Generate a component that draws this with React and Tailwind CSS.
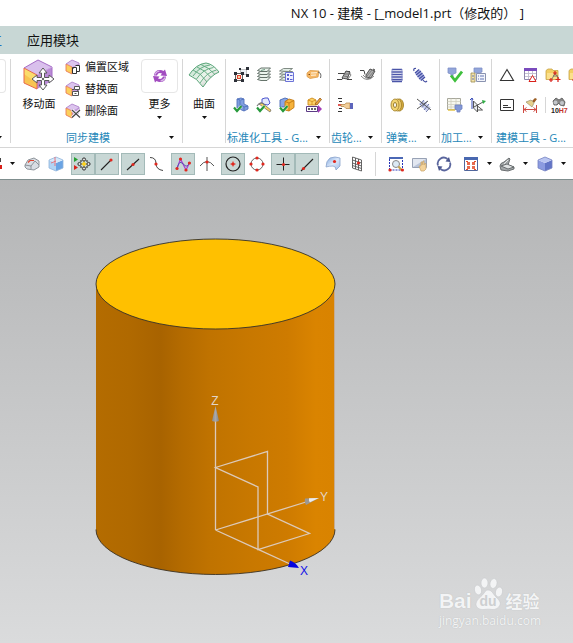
import React from "react";

const RED = "#d9201a";

function Icon({ size = 16, w, h, box, children }) {
  const width = w || size;
  const height = h || size;
  return (
    <svg width={width} height={height} viewBox={box || `0 0 ${width} ${height}`} className="block shrink-0" aria-hidden="true">
      {children}
    </svg>
  );
}

function Caret() {
  return (
    <svg width="5" height="3" viewBox="0 0 5 3" className="block shrink-0" aria-hidden="true">
      <path d="M0 0h5L2.500 3z" fill="#111" />
    </svg>
  );
}

/* ---------- large and face-editing icons ---------- */

function MoveFaceIcon() {
  return (
    <Icon w={32} h={32}>
      <path d="M1 9l13 7v14L1 24z" fill="#f8c552" />
      <path d="M1 9l13 7v8L1 15z" fill="#fbdc6c" />
      <path d="M1 9L15 1l14 7-15 8z" fill="#d9c0ec" />
      <path d="M14 16l15-8v14l-15 8z" fill="#b98ad6" />
      <path d="M14 30L1 24V9l13 7z" fill="none" stroke="#e8694c" />
      <path d="M1 9L15 1l14 7v12" fill="none" stroke="#a56cc6" />
      <path d="M14 16l15-8" stroke="#c9a2e0" />
      <path d="M20 9l4 5h-2.500v4.500H26V16l5 4-5 4v-2.500h-4.500V26H24l-4 5-4-5h2.500v-4.500H14V24l-5-4 5-4v2.500h4.500V14H16z" fill="#fff" stroke="#5a5a5a" />
      <circle cx="20" cy="20" r="1.200" fill="#6a6a6a" />
    </Icon>
  );
}

function MiniCube({ children }) {
  return (
    <Icon>
      <path d="M1 5l6 3v7l-6-3z" fill="#fbd05c" />
      <path d="M1 5l6-4 7 3-7 4z" fill="#dcc4ee" />
      <path d="M7 8l7-4v7l-7 4z" fill="#c39cdc" />
      <path d="M7 15l-6-3V5l6 3z" fill="none" stroke="#ea7a58" strokeWidth=".9" />
      <path d="M1 5l6-4 7 3v4" fill="none" stroke="#b083cc" strokeWidth=".9" />
      {children}
    </Icon>
  );
}

const OffsetIcon = () => (
  <MiniCube>
    <path d="M7.500 8.500h4v6h-4zM10.500 6.500h4v6h-3" fill="#fff" stroke="#333" />
    <path d="M7.500 10l2-2" stroke="#333" />
  </MiniCube>
);
const ReplaceIcon = () => (
  <MiniCube>
    <path d="M7.500 10.500h6v4h-6zM9.500 5.500h5v3h-5z" fill="#fff" stroke="#555" />
    <path d="M7 8.500h2M12 9.500l2 1M9.500 12.500h2" stroke="#555" />
  </MiniCube>
);
const DeleteFaceIcon = () => (
  <MiniCube>
    <path d="M7 7l8 7.500M15 7l-8 7.500" stroke="#fff" strokeWidth="3" />
    <path d="M7 7l8 7.500M15 7l-8 7.500" stroke="#484848" strokeWidth="1.200" />
  </MiniCube>
);

function RefreshIcon() {
  return (
    <Icon>
      <path d="M2 7.500Q2.500 2 8 2q2 0 3.500 1L13 1.500 15 8l-6.500-.5L10 5.500Q6 4 5 7.500z" fill="#a24cc0" />
      <path d="M14 8.500Q13.500 14 8 14q-2 0-3.500-1L3 14.500 1 8l6.500.5L6 10.500Q10 12 11 8.500z" fill="#a24cc0" />
      <path d="M3 6.500Q4 3.500 7.500 3M13 9.500Q12 12.500 8.500 13" fill="none" stroke="#d9b8e8" strokeWidth="1.200" />
    </Icon>
  );
}

function SurfaceIcon() {
  return (
    <Icon w={32} h={26}>
      <defs>
        <linearGradient id="surf" x1="0" y1="0" x2="1" y2="1">
          <stop offset="0" stopColor="#b9dec8" />
          <stop offset=".55" stopColor="#eef5ee" />
          <stop offset="1" stopColor="#b0aeae" />
        </linearGradient>
      </defs>
      <path d="M1 13Q8 2 18 1q7 1 13 9-8 3-16 15Q9 16 1 13z" fill="url(#surf)" stroke="#5aa67a" />
      <path d="M5 8q8 3 14 12M9 5q8 3 14 10.500M13 2.500q8 3 14 10M5 14Q12 4 22 3M8.500 17Q15 7 25.500 5.500M12 21Q19 10 28.500 8" fill="none" stroke="#5aa67a" strokeWidth=".9" />
    </Icon>
  );
}

/* ---------- ribbon grid icons ---------- */

const SketchBoxesIcon = () => (
  <Icon>
    <path d="M7.500 2.500h6v5h-6z" fill="#eef2f7" stroke="#888" strokeDasharray="1 1" />
    <path d="M2.500 6.500h7v7h-7z" fill="#fff" stroke="#333" strokeWidth=".8" />
    <path d="M4.500 8.500h3v3h-3z" fill="#fbe7b0" stroke="#e0442f" strokeWidth="1.200" />
    <path d="M1 5h3v3H1zM8 5h3v3H8zM1 12h3v3H1zM8 12h3v3H8zM6 1h2v2H6zM13 0h3v3h-3zM13 7h3v3h-3z" fill="#2c3038" />
  </Icon>
);
const StackIcon = () => (
  <Icon>
    {[10, 7, 4, 1].map((y) => (
      <path key={y} d={`M1.500 ${y + 2.500}l3.500-2.500h9.500l-3.500 3.500H5z`} fill="#eaf3ec" stroke="#56645c" strokeWidth=".9" />
    ))}
    <path d="M5 3.500l4-1" stroke="#6a9b80" />
  </Icon>
);
const StackListIcon = () => (
  <Icon>
    {[10, 7, 4, 1].map((y) => (
      <path key={y} d={`M.5 ${y + 3}l4-2.500h9l-4 3z`} fill="#e3eee6" stroke="#748078" strokeWidth=".9" />
    ))}
    <path d="M6.500 5.500h8v9h-8z" fill="#eef0ff" stroke="#6c74d8" />
    <path d="M8 7h2v2H8zM8 11h2v2H8z" fill="#5961cf" />
    <path d="M11 8.500h2.500M11 12.500h2.500" stroke="#5961cf" />
  </Icon>
);
const TagIcon = () => (
  <Icon>
    <path d="M1 6l3-2.500 9 .5-1 6-8 1.500L1 9.500z" fill="#f6b766" stroke="#dc9a48" strokeWidth=".8" />
    <path d="M5 6l6-.3M5 8.300l5-.3" stroke="#fff6e4" />
    <path d="M2.500 7.500h1.500" stroke="#804a10" />
    <path d="M12 5q4 1 2.500 6" fill="none" stroke="#555" strokeWidth=".9" />
  </Icon>
);
const CheckMark = () => (
  <>
    <path d="M1 10.500l3 3.500 4.500-5" fill="none" stroke="#fff" strokeWidth="3" />
    <path d="M1 10.500l3 3.500 4.500-5" fill="none" stroke="#279a3c" strokeWidth="2.200" />
  </>
);
const BluePartIcon = () => (
  <Icon>
    <path d="M4 2l4-1 3 1v5l4 2v3l-4 2-7-3z" fill="#7f9fdf" stroke="#5272bc" strokeWidth=".9" />
    <path d="M4 2l3 1v7M8 3l3-1M8 8l3 2 4-1M11 10v4" fill="none" stroke="#5272bc" strokeWidth=".9" />
    <CheckMark />
  </Icon>
);
const PartToolIcon = () => (
  <Icon>
    <path d="M6 2l3-1h3l2 5-2 2-6-1z" fill="#e4e8fb" stroke="#4c56cf" />
    <path d="M3 7l11 8 1-2-9-7z" fill="#f6d05c" stroke="#666" strokeWidth=".7" />
    <path d="M1 9q4-6 8-1" fill="none" stroke="#777" strokeWidth="1.200" />
    <CheckMark />
  </Icon>
);
const OrangeCubeIcon = () => (
  <Icon>
    <path d="M1 3l5-2 3 1v8H1z" fill="#89a5e4" stroke="#4668b4" strokeWidth=".9" />
    <path d="M6 4.500L10 2l5 1.500v7L10 14l-4-1z" fill="#f6b33c" stroke="#c27812" strokeWidth=".9" />
    <path d="M6 4.500l4 1.500 5-2.500M10 6v8" fill="none" stroke="#c27812" strokeWidth=".9" />
    <CheckMark />
  </Icon>
);
const PartDrawIcon = () => (
  <Icon>
    <path d="M2 3l4-2 4 2v5H2z" fill="#fbd269" stroke="#cf8a18" strokeWidth=".9" />
    <path d="M2 3l4 1.500L10 3M6 4.500V8" fill="none" stroke="#cf8a18" strokeWidth=".8" />
    <path d="M9 7l5-6 1.500 1.500L11 8z" fill="#e8a23a" stroke="#8a4c10" strokeWidth=".7" />
    <path d="M.500 9.500h11v5H.500z" fill="#fff" stroke="#5b3b85" />
    <path d="M2 12h2M5 12h2M8 12h2" stroke="#333" strokeWidth="1.500" />
    <path d="M12 8l4 4-4 4z" fill="#a23bb8" />
  </Icon>
);
const GearIconA = () => (
  <Icon>
    <path d="M0 12.500h5l4-8h4M10 12.500h5M1 6.500h6" fill="none" stroke="#444" />
    <path d="M5 11l4-7 4 1-3 7z" fill="#b4b4b4" stroke="#444" strokeWidth=".9" />
    <path d="M12 5l2 3-3 4M7 9l5 1M8 7l5 0" fill="none" stroke="#666" strokeWidth=".8" />
  </Icon>
);
const GearIconB = () => (
  <Icon>
    <path d="M0 3.500h4l1 4M13 2l2 1" fill="none" stroke="#444" />
    <path d="M6 8l4-6 5 2-4 7-5-1z" fill="#b0b0b0" stroke="#444" strokeWidth=".9" />
    <path d="M1 9q6 7 13 0M7 9l5-6M9 10l5-6M3 8q4 5 8 3" fill="none" stroke="#777" strokeWidth=".9" />
  </Icon>
);
const GearListIcon = () => (
  <Icon>
    <path d="M1 1.500h4M2 4.500h3M2 11.500h3M1 14.500h4" stroke="#333" />
    <path d="M1 8h4" stroke={RED} strokeWidth="1.500" />
    <path d="M4 7.500h4l1-1.500h4v5.500H9l-2-2H4z" fill="#f2cf9a" stroke="#b98c50" strokeWidth=".8" />
    <path d="M13 6h3v6h-3z" fill="#5d65bc" />
  </Icon>
);
const SpringIcon = () => (
  <Icon>
    <path d="M3 2.500h10M2.500 5h11M2.500 7.500h11M2.500 10h11M2.500 12.500h11M3 14.500h10" stroke="#4a54a8" strokeWidth="1.300" />
    <path d="M3 2v12M13 2v12" stroke="#8188c8" strokeWidth=".8" />
  </Icon>
);
const TiltSpringIcon = () => (
  <Icon>
    <path d="M2 4Q1 1 4 1.500M11 13q2 3 4 1" fill="none" stroke="#454fa2" strokeWidth="1.200" />
    <path d="M5 4l6 8" stroke="#a9b0e2" strokeWidth="5.500" />
    <path d="M3 6l4-3.500M4 8l5-4M5.500 10l5-4M7 12l5-4M9 13.500l4-3.500" stroke="#454fa2" strokeWidth="1.200" />
  </Icon>
);
const DiscIcon = () => (
  <Icon>
    <ellipse cx="10.500" cy="8" rx="4" ry="6" fill="#d5ab3d" stroke="#a5832c" strokeWidth=".9" />
    <ellipse cx="8.500" cy="8" rx="4" ry="6" fill="#f0cf70" stroke="#a5832c" strokeWidth=".9" />
    <ellipse cx="6" cy="8" rx="4" ry="6" fill="#f0d270" stroke="#a5832c" strokeWidth=".9" />
    <ellipse cx="6" cy="8" rx="1.500" ry="2.500" fill="#fff" stroke="#8e6f1d" strokeWidth=".9" />
  </Icon>
);
const CutSpringIcon = () => (
  <Icon>
    <path d="M5 5l7 7" stroke="#c9cfee" strokeWidth="6" />
    <path d="M4 8l4-5M6 10.500l5-6M8 13l5-6M10 15l4-4.500" stroke="#6a74a8" />
    <path d="M1 2l14 11M1 12l11-8" stroke="#555" />
  </Icon>
);
const MachineCheckIcon = () => (
  <Icon>
    <path d="M1 1h8v5l-3 1v3H4V7L1 6z" fill="#93a6da" stroke="#7f90c6" strokeWidth=".8" />
    <path d="M4 8.500l4 5 7-9" fill="none" stroke="#3fbf3d" strokeWidth="2.800" />
  </Icon>
);
const MachineListIcon = () => (
  <Icon>
    <path d="M4 1h8v4l-3 1H6L4 5z" fill="#93a6da" stroke="#7f90c6" strokeWidth=".8" />
    <path d="M1 6h4v9H1z" fill="#f4e3a8" stroke="#9a8a50" strokeWidth=".8" />
    <path d="M6.500 6.500h9v8h-9z" fill="#f3f5fb" stroke="#8a93b0" />
    <path d="M8 9h1M10 9h4M8 12h1M10 12h4M2 9h2M2 12h2" stroke="#6277b5" />
  </Icon>
);
const MachineTableIcon = () => (
  <Icon>
    <path d="M.5 1.500h13v11H.5z" fill="#f7f7ee" stroke="#a7a79b" />
    <path d="M.5 4.500h13M.5 7.500h13M.5 10h13M4 1.500v11M9 1.500v11" stroke="#cfcebf" strokeWidth=".8" />
    <path d="M1 13h7" stroke="#e4c44c" strokeWidth="1.500" />
    <path d="M8 8h7v4l-2 1v2h-3v-2l-2-1z" fill="#8398d6" stroke="#6f82c0" strokeWidth=".8" />
  </Icon>
);
const AxesPlaneIcon = () => (
  <Icon>
    <path d="M2 12V1M0 3l2-2 1 2" fill="none" stroke="#3a4fb8" />
    <path d="M3.500 4l4 4v7l-4-4z" fill="#eceff2" stroke="#444" strokeWidth=".9" />
    <path d="M4 10l9-5M7.500 9l5 4H7.500" fill="none" stroke="#444" strokeWidth=".9" />
    <path d="M12 3l4 1-3 3z" fill="#2fae44" />
  </Icon>
);
const TriangleIcon = () => (
  <Icon>
    <path d="M8 2.500l6.500 11h-13z" fill="none" stroke="#333" strokeWidth="1.100" />
  </Icon>
);
const TableTriIcon = () => (
  <Icon>
    <path d="M2.500 1.500h12v11h-12z" fill="#fff" stroke="#8d86ab" />
    <path d="M2 1h13v3H2z" fill="#7a4bbd" />
    <path d="M3 6.500h11M3 9.500h11M6.500 4v8M10.500 4v8" stroke="#c0bcce" strokeWidth=".9" />
    <path d="M10.500 8.500l3.500 6H7z" fill="#fff" stroke={RED} />
  </Icon>
);
const FolderStarIcon = () => (
  <Icon>
    <path d="M1 3.500l2-1.500h4l1 1.500h5v9H1z" fill="#f3cf64" stroke="#c8a44a" strokeWidth=".8" />
    <path d="M2 6h10v6H2z" fill="#fbe08b" />
    <path d="M10 6l-3 6M10 6l4 6M8 9h5" stroke="#666" strokeWidth=".8" />
    <path d="M10 4v4M8 6h4M6 11v4M4 13h4M13 10v5M10.500 12.500h5" stroke={RED} strokeWidth="1.200" />
  </Icon>
);
const NoteIcon = () => (
  <Icon>
    <path d="M1.500 2.500h13v11h-13z" fill="#fff" stroke="#333" />
    <path d="M4 8.500h5M4 10.500h8" stroke="#333" />
  </Icon>
);
const BrushDimIcon = () => (
  <Icon>
    <path d="M10 4l3-3 2 1-3 4z" fill="#9a5c22" />
    <path d="M4 5l5-2 3 3-2 4z" fill="#e6cf8c" stroke="#a59a78" strokeWidth=".8" />
    <path d="M1.500 8v8M14.500 8v8M2 12.500h12M4.500 10.500l-2.500 2 2.500 2M11.500 10.500l2.500 2-2.500 2" fill="none" stroke="#cf4a42" />
  </Icon>
);
const FitIcon = () => (
  <Icon w={18} h={16}>
    <path d="M3 4l3-3 3 2 3-2 3 4-1 4-4-1-1-2-2 2H4z" fill="#888" stroke="#555" strokeWidth=".8" />
    <circle cx="5.500" cy="5.500" r="2" fill="#c2c6ca" />
    <circle cx="12" cy="6" r="2" fill="#c2c6ca" />
    <text x="1" y="16" fontSize="7" fontWeight="700" fontFamily="Liberation Sans, Arial, sans-serif" fill="#222">10<tspan fill="#c4332c">H7</tspan></text>
  </Icon>
);

/* ---------- selection bar icons ---------- */

const SolidIcon = () => (
  <Icon>
    <path d="M1 9l3-5 6-2 5 3v6l-5 3-7-1-2-2z" fill="#d8dde3" stroke="#858b92" strokeWidth=".9" />
    <path d="M1 9l6 1 4-5M7 10v3M11 5l4 4" fill="none" stroke="#858b92" strokeWidth=".9" />
    <path d="M4 6.500l2-2h4" fill="none" stroke="#e0442f" strokeWidth="1.200" />
  </Icon>
);
const BlueBoxIcon = () => (
  <Icon>
    <path d="M1 4l7 3v8l-7-3z" fill="#b3d4f4" />
    <path d="M8 7l7-3v8l-7 3z" fill="#6aa4e4" />
    <path d="M1 4l7-3 7 3-7 3z" fill="#d6e9fb" />
    <path d="M1 4l7-3 7 3v8l-7 3-7-3z" fill="none" stroke="#8fb4da" strokeWidth=".8" />
    <path d="M7 1v9M3 7l5-2" stroke="#e66a72" strokeWidth=".9" />
  </Icon>
);
const SnapIcon = () => (
  <Icon w={18} h={16}>
    <path d="M0 1l4 2.500L0 6z" fill="#26a032" />
    <path d="M0 9l4 2.500L0 14z" fill={RED} />
    <path d="M10 3v10M5 8h10" stroke="#e0b400" />
    <circle cx="10" cy="3.500" r="1.600" fill="#ddd" stroke="#333" />
    <circle cx="10" cy="12.500" r="1.600" fill="#ddd" stroke="#333" />
    <circle cx="5.500" cy="8" r="1.600" fill="#ddd" stroke="#333" />
    <circle cx="14.500" cy="8" r="1.600" fill="#ddd" stroke="#333" />
    <circle cx="10" cy="8" r="1.800" fill="#ffd21c" />
    <path d="M6.500 4.500l1 1M12.500 5.500l1-1M6.500 11.500l1-1M13.500 11.500l-1-1" stroke="#222" strokeWidth="1.500" />
  </Icon>
);
const Dot = ({ x, y }) => <circle cx={x} cy={y} r="1.600" fill="#e0281f" />;
const EndPointIcon = () => (
  <Icon>
    <path d="M2 14L12 4" stroke="#222" strokeWidth="1.100" />
    <Dot x={12} y={4} />
  </Icon>
);
const MidPointIcon = () => (
  <Icon>
    <path d="M2 14L14 3" stroke="#222" strokeWidth="1.100" />
    <Dot x={8} y={8.500} />
  </Icon>
);
const CurvePointIcon = () => (
  <Icon>
    <path d="M1 1.500q6 0 6 6t7 7" fill="none" stroke="#444" />
    <Dot x={7} y={8} />
  </Icon>
);
const PolePointIcon = () => (
  <Icon>
    <path d="M2 12.500L5.500 3l5.500 11 3.500-7" fill="none" stroke="#a83bd4" strokeWidth="1.200" />
    <path d="M2 12.500q2-7 4-6t4 3 4.500-2.500" fill="none" stroke="#5a4fae" />
    <Dot x={2} y={12.500} />
    <Dot x={5.500} y={3} />
    <Dot x={11} y={14} />
    <Dot x={14.400} y={7} />
  </Icon>
);
const IntersectIcon = () => (
  <Icon>
    <path d="M8 1v14M1 10q7-9 14 0" fill="none" stroke="#555" />
    <Dot x={8} y={6} />
  </Icon>
);
const CenterIcon = () => (
  <Icon>
    <circle cx="8" cy="8" r="7" fill="none" stroke="#222" strokeWidth="1.200" />
    <path d="M8 5.500v5M5.500 8h5" stroke="#e0281f" />
    <Dot x={8} y={8} />
  </Icon>
);
const QuadrantIcon = () => (
  <Icon>
    <circle cx="8" cy="8" r="6" fill="none" stroke="#666" />
    <Dot x={8} y={2} />
    <Dot x={8} y={14} />
    <Dot x={2} y={8} />
    <Dot x={14} y={8} />
  </Icon>
);
const PlusIcon = () => (
  <Icon>
    <path d="M8.500 1.500v13M1.500 8.500h13" stroke="#222" />
    <Dot x={8.500} y={8.500} />
  </Icon>
);
const OnCurveIcon = () => (
  <Icon>
    <path d="M2 15L14 3" stroke="#222" strokeWidth="1.100" />
    <Dot x={4.500} y={12.500} />
  </Icon>
);
const OnFaceIcon = () => (
  <Icon>
    <defs>
      <linearGradient id="face" x1="0" y1="0" x2="1" y2="1">
        <stop offset="0" stopColor="#7fa6dd" />
        <stop offset=".5" stopColor="#dbe8fa" />
        <stop offset="1" stopColor="#9dbbe8" />
      </linearGradient>
    </defs>
    <path d="M1 11Q1 5 5 2q5-2 10 0v8l-4 4q0-4-3-4-4 0-7 1z" fill="url(#face)" stroke="#8aa3cc" strokeWidth=".8" />
    <Dot x={9.500} y={5.500} />
  </Icon>
);
const GridPointIcon = () => (
  <Icon>
    <path d="M3.500 1l9 3v11l-9-3zM3.500 4l9 3M3.500 7l9 3M3.500 9.500l9 3M6.500 2v11M9.500 3v11" fill="none" stroke="#555" strokeWidth=".9" />
    <Dot x={9.500} y={7} />
  </Icon>
);
const ZoomFitIcon = () => (
  <Icon>
    <path d="M1.500 14V2h13v12z" fill="#fff" stroke="#2736b8" strokeDasharray="2 1" />
    <path d="M1 1h14v2H1z" fill="#4b68b5" />
    <circle cx="8" cy="8" r="3.500" fill="#dceaf4" stroke="#888" />
    <path d="M10.500 10.500l3 3.500" stroke="#c9a44c" strokeWidth="2" />
    <Dot x={2} y={14} />
    <Dot x={14.400} y={14} />
  </Icon>
);
const PanIcon = () => (
  <Icon>
    <path d="M.5 2.500h14v9H.5z" fill="#b9c4d8" stroke="#98a2b5" />
    <path d="M1 3h13L1 11z" fill="#e2e7f0" />
    <path d="M7 10l2 0V6h1v3l1-4h1v4l1-2 1 1v5l-2 2H9z" fill="#f3d39b" stroke="#c9a568" strokeWidth=".7" />
  </Icon>
);
const RotateIcon = () => (
  <Icon>
    <path d="M2 9.500A6 6 0 0 1 11.500 3M14 6.500A6 6 0 0 1 4.500 13" fill="none" stroke="#5a669e" strokeWidth="1.800" />
    <path d="M9.500 5.500l5 .5-1.500-5zM6.500 10.500l-5-.5 1.500 5z" fill="#4a568e" />
  </Icon>
);
const WindowIcon = () => (
  <Icon>
    <path d="M1.500 1.500h13v13h-13z" fill="#fff" stroke="#50669c" />
    <path d="M1 1h14v3H1z" fill="#4968b0" />
    <path d="M4 6h3v3H4zM9 6h3v3H9zM4 10h3v3H4zM9 10h3v3H9z" fill="#e66a4f" />
    <path d="M3 5h2v1H3zM11 5h2v1h-2zM3 13h2v1H3zM11 13h2v1h-2z" fill="#e6502f" />
  </Icon>
);
const ClipIcon = () => (
  <Icon>
    <path d="M1 10q0-3 4-4l5-4 1 1-2 6 6 2v2l-6 2-7-1z" fill="#a4a8aa" stroke="#606466" strokeWidth=".9" />
    <path d="M2 10l6-2 7 3-6 2z" fill="#e0e3e4" stroke="#606466" strokeWidth=".9" />
    <path d="M5 8l4-4" stroke="#e5e7e8" />
  </Icon>
);
const ShadedIcon = () => (
  <Icon>
    <path d="M1 4l7 3v8l-7-3z" fill="#8b9be0" />
    <path d="M8 7l7-3v8l-7 3z" fill="#6275c6" />
    <path d="M1 4l7-3 7 3-7 3z" fill="#b9c5f1" />
    <path d="M1 4l7-3 7 3v8l-7 3-7-3z" fill="none" stroke="#7382c2" strokeWidth=".8" />
  </Icon>
);

/* ---------- ribbon ---------- */

function RibbonGroup({ width, label, labelClass, children }) {
  return (
    <section aria-label={label} className={`flex shrink-0 flex-col justify-between border-r border-[#d6d6d6] ${width}`}>
      {children}
      <div className={`flex h-3 items-center justify-between ${labelClass}`}>
        <h2 className="whitespace-nowrap leading-none text-[#2487b8]">{label}</h2>
        <button type="button" aria-label={label}>
          <Caret />
        </button>
      </div>
    </section>
  );
}

function IconRow({ items }) {
  return (
    <div className="flex h-4">
      {items.map(([name, Pic], i) =>
        name === "|" ? (
          <span key={i} className="mr-1 w-px bg-[#d6d6d6]" />
        ) : (
          <button key={i} type="button" aria-label={name} className="mr-[7px] shrink-0">
            <Pic />
          </button>
        )
      )}
    </div>
  );
}

function IconRows({ rows }) {
  return (
    <div className="flex flex-col gap-[14px] pt-2 pl-[7px]">
      {rows.map((items, i) => (
        <IconRow key={i} items={items} />
      ))}
    </div>
  );
}

const iconGroups = [
  {
    label: "标准化工具 - G...",
    width: "w-[104px]",
    rows: [
      [["草图", SketchBoxesIcon], ["图层", StackIcon], ["图层列表", StackListIcon], ["|"], ["标签", TagIcon]],
      [["零件检查", BluePartIcon], ["工具检查", PartToolIcon], ["装配检查", OrangeCubeIcon], ["|"], ["重命名", PartDrawIcon]],
    ],
  },
  {
    label: "齿轮...",
    width: "w-[52px]",
    rows: [
      [["圆柱齿轮", GearIconA], ["圆锥齿轮", GearIconB]],
      [["齿轮列表", GearListIcon]],
    ],
  },
  {
    label: "弹簧...",
    width: "w-[58px]",
    indent: "pl-1",
    rows: [
      [["压缩弹簧", SpringIcon], ["拉伸弹簧", TiltSpringIcon]],
      [["碟形弹簧", DiscIcon], ["|"], ["删除弹簧", CutSpringIcon]],
    ],
  },
  {
    label: "加工...",
    width: "w-[52px]",
    rows: [
      [["加工检查", MachineCheckIcon], ["加工列表", MachineListIcon]],
      [["加工表格", MachineTableIcon], ["坐标平面", AxesPlaneIcon]],
    ],
  },
  {
    label: "建模工具 - G...",
    width: "w-[104px]",
    indent: "pl-1",
    rows: [
      [["三角形", TriangleIcon], ["表格", TableTriIcon], ["文件夹", FolderStarIcon], ["收藏", FolderStarIcon]],
      [["注释", NoteIcon], ["清理尺寸", BrushDimIcon], ["|"], ["配合", FitIcon]],
    ],
  },
];

const faceTools = [
  ["偏置区域", OffsetIcon],
  ["替换面", ReplaceIcon],
  ["删除面", DeleteFaceIcon],
];

function Ribbon() {
  return (
    <div className="flex h-[94px] overflow-hidden border-b border-[#d6d6d6] bg-white pt-[5px] pb-1 text-[11px]">
      <div className="flex w-[11px] shrink-0 flex-col justify-between border-r border-[#d6d6d6]">
        <div className="h-[34px] w-[6px] rounded-r border border-l-0 border-[#e6e6e6]" />
        <div className="flex h-3 w-[2px] items-center justify-end overflow-hidden">
          <Caret />
        </div>
      </div>

      <RibbonGroup width="w-[172px]" label="同步建模" labelClass="pl-[55px] pr-2">
        <div className="flex">
          <button type="button" className="ml-3 flex w-8 flex-col items-center gap-[7px] whitespace-nowrap leading-3">
            <MoveFaceIcon />
            移动面
          </button>
          <div className="ml-[10px] flex w-[76px] flex-col gap-[6px]">
            {faceTools.map(([name, Pic]) => (
              <button key={name} type="button" className="flex h-4 items-center gap-1 whitespace-nowrap leading-4">
                <Pic />
                {name}
              </button>
            ))}
          </div>
          <button type="button" className="flex w-[37px] flex-col items-center leading-3">
            <span className="flex h-[34px] w-full items-center justify-center rounded border border-[#e6e6e6]">
              <RefreshIcon />
            </span>
            <span className="mt-[5px] mb-[6px]">更多</span>
            <Caret />
          </button>
        </div>
      </RibbonGroup>

      <div className="flex w-[43px] shrink-0 justify-center border-r border-[#d6d6d6] pt-[3px]">
        <button type="button" className="flex h-fit flex-col items-center leading-3">
          <SurfaceIcon />
          <span className="mt-[10px] mb-[6px]">曲面</span>
          <Caret />
        </button>
      </div>

      {iconGroups.map((g) => (
        <RibbonGroup key={g.label} width={g.width} label={g.label} labelClass={`pr-2 ${g.indent || "pl-px"}`}>
          <IconRows rows={g.rows} />
        </RibbonGroup>
      ))}
    </div>
  );
}

/* ---------- selection bar ---------- */

function BarButton({ name, pic: Pic, active }) {
  return (
    <button
      type="button"
      aria-label={name}
      aria-pressed={!!active}
      className={`flex h-[22px] w-6 shrink-0 items-center justify-center border ${active ? "border-[#a3bab8] bg-[#c8d7d5]" : "border-transparent"}`}
    >
      <Pic />
    </button>
  );
}

function BarCaret({ name }) {
  return (
    <button type="button" aria-label={name} className="flex h-[22px] w-3 shrink-0 items-center justify-center">
      <Caret />
    </button>
  );
}

const snapPairs = [
  [["捕捉点", SnapIcon, true], ["端点", EndPointIcon, true]],
  [["中点", MidPointIcon, true], ["控制点", CurvePointIcon]],
  [["极点", PolePointIcon, true], ["交点", IntersectIcon]],
  [["圆弧中心", CenterIcon, true], ["象限点", QuadrantIcon]],
  [["现有点", PlusIcon, true], ["曲线上的点", OnCurveIcon, true]],
  [["面上的点", OnFaceIcon], ["栅格点", GridPointIcon]],
];

function SelectionBar() {
  return (
    <div className="flex h-8 items-center overflow-hidden border-b border-[#7f8e8e] bg-white">
      <svg width="2" height="14" viewBox="0 0 2 14" className="shrink-0" aria-hidden="true">
        <path d="M0 1h1v4H0z" fill="#444" />
        <path d="M0 8h2v4H0z" fill={RED} />
      </svg>
      <span className="w-1 shrink-0" />
      <BarCaret name="过滤器" />
      <div className="ml-[2px] flex">
        <BarButton name="实体" pic={SolidIcon} />
        <BarButton name="透明盒" pic={BlueBoxIcon} />
      </div>
      <div className="ml-[3px] flex gap-[2px]">
        {snapPairs.map((pair, i) => (
          <div key={i} className="flex">
            {pair.map(([name, pic, active]) => (
              <BarButton key={name} name={name} pic={pic} active={active} />
            ))}
          </div>
        ))}
      </div>
      <span className="ml-[6px] mr-2 h-6 w-px shrink-0 bg-[#d6d6d6]" />
      <BarButton name="适合窗口" pic={ZoomFitIcon} />
      <BarButton name="平移" pic={PanIcon} />
      <BarButton name="旋转" pic={RotateIcon} />
      <span className="w-[3px] shrink-0" />
      <BarButton name="窗口" pic={WindowIcon} />
      <BarCaret name="窗口选项" />
      <BarButton name="截面" pic={ClipIcon} />
      <BarCaret name="截面选项" />
      <span className="w-[2px] shrink-0" />
      <BarButton name="着色" pic={ShadedIcon} />
      <BarCaret name="着色选项" />
    </div>
  );
}

/* ---------- model view ---------- */

function ModelDrawing() {
  return (
    <svg width="573" height="463" viewBox="0 0 573 463" className="block shrink-0" role="img" aria-label="圆柱">
      <defs>
        <linearGradient id="side" x1="0" y1="0" x2="1" y2="0">
          <stop offset="0" stopColor="#b46c00" />
          <stop offset=".14" stopColor="#b06900" />
          <stop offset=".27" stopColor="#a86300" />
          <stop offset=".36" stopColor="#b46b00" />
          <stop offset=".48" stopColor="#c07300" />
          <stop offset=".65" stopColor="#c87800" />
          <stop offset=".8" stopColor="#ce7b00" />
          <stop offset=".92" stopColor="#da8400" />
          <stop offset="1" stopColor="#d98300" />
        </linearGradient>
        <linearGradient id="cone" x1="0" y1="0" x2="1" y2="0">
          <stop offset="0" stopColor="#8b8b8b" />
          <stop offset=".5" stopColor="#a9a9a9" />
          <stop offset="1" stopColor="#858585" />
        </linearGradient>
      </defs>
      <path d="M96 104v245.500a119.500 45 0 0 0 239 0V104z" fill="url(#side)" />
      <path d="M96 349.500a119.500 45 0 0 0 239 0" fill="none" stroke="#3a3020" strokeWidth=".9" />
      <path d="M334.500 104v245" stroke="#c5ab92" />
      <ellipse cx="215.500" cy="104" rx="119.500" ry="45" fill="#ffc000" stroke="#33302a" strokeWidth=".9" />
      <g fill="none" stroke="#dccaba" strokeWidth="1.300">
        <path d="M215.500 350V240M215.500 350L306 322M215.500 350L290 384" />
        <path d="M215.500 287.500L267.500 271.500V334L309.500 353.500L258 369.500V307z" />
      </g>
      <path d="M215.500 226l3.500 15q-3.500 1.500-7 0z" fill="url(#cone)" />
      <path d="M319 318l-14 0.500q-1 3 1 6.500z" fill="#9b9894" />
      <path d="M319 318l-10 .3q-.5 2.500 1 4z" fill="#eeeceb" />
      <path d="M299 388l-11-1 2-6.500q6 2 9 7.500z" fill="#0505e0" />
      <g fontSize="12" fontFamily="Liberation Sans, Arial, sans-serif" textAnchor="middle">
        <text x="215" y="225" fill="#e2d5c8">Z</text>
        <text x="324" y="321" fill="#e2d5c8">Y</text>
        <text x="304" y="395" fill="#1212e6">X</text>
      </g>
    </svg>
  );
}

function Watermark() {
  return (
    <div className="absolute right-[32px] bottom-[12px] text-[#f3f4f5]">
      <div className="flex items-end">
        <span className="font-['Liberation_Sans',Arial,sans-serif] text-[21px] font-bold leading-5 [text-shadow:0_0_1px_#b0b3b5]">Bai</span>
        <svg width="32" height="34" viewBox="0 0 30 34" className="-mt-2 block" aria-hidden="true">
          <g fill="#f3f4f5" stroke="#c8cacc" strokeWidth=".6">
            <ellipse cx="5" cy="13" rx="3.500" ry="5" transform="rotate(-15 5 13)" />
            <ellipse cx="11.500" cy="6" rx="3.500" ry="5" />
            <ellipse cx="20.500" cy="6.500" rx="3.500" ry="5" transform="rotate(12 20.500 6.500)" />
            <ellipse cx="26" cy="15" rx="3.500" ry="5" transform="rotate(15 26 15)" />
            <path d="M15 13c4 0 5 4 8 7s5 5 4 8-5 5-8 4.500-5-.5-8 0-8-1-8-5 3-6 6-9 3-5.500 6-5.500z" />
          </g>
          <text x="15" y="29" textAnchor="middle" fontSize="14" fontWeight="700" fontFamily="Liberation Sans, Arial, sans-serif" fill="#cdcfd1">du</text>
        </svg>
        <span className="ml-[2px] font-['Noto_Sans_CJK_SC',sans-serif] text-[17px] font-bold leading-5 [text-shadow:0_0_1px_#b0b3b5]">经验</span>
      </div>
      <p className="font-['Open_Sans',sans-serif] text-[12px] leading-5 [text-shadow:0_0_1px_#b0b3b5]">jingyan.baidu.com</p>
    </div>
  );
}

export default function App() {
  return (
    <div className="flex min-h-screen w-full flex-col overflow-hidden bg-white font-['Open_Sans','Noto_Sans_CJK_SC',sans-serif] text-[#111]">
      <header className="flex h-[26px] items-center justify-end pr-[49px]">
        <h1 className="whitespace-nowrap text-[13px] leading-4">NX 10 - 建模 - [_model1.prt（修改的） ]</h1>
      </header>
      <nav className="flex h-7 items-center bg-[#c8d7d5] text-[13px] leading-5">
        <button type="button" className="flex w-[2px] justify-end overflow-hidden whitespace-nowrap text-[#1d6fc0]">工</button>
        <button type="button" className="ml-[25px]">应用模块</button>
      </nav>
      <Ribbon />
      <SelectionBar />
      <main className="relative flex-1 overflow-hidden bg-linear-to-b from-[#b4b5b6] to-[#dadbdc]">
        <ModelDrawing />
        <Watermark />
      </main>
    </div>
  );
}
